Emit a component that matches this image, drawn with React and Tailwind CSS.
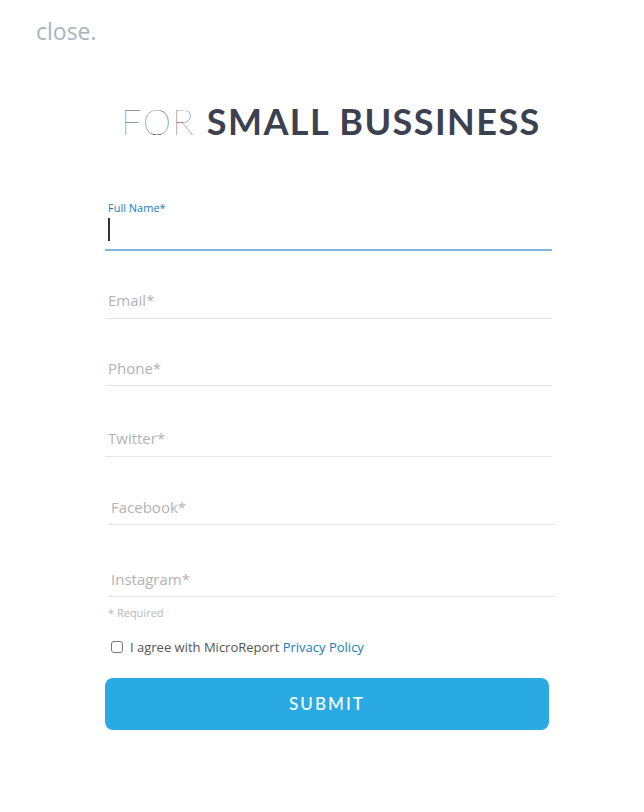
export default function App() {
  const fieldText = "text-[15px] leading-[20px] text-[#b3b3b3]";
  const font = { fontFamily: '"Open Sans", "Liberation Sans", sans-serif' };
  return (
    <div className="w-[644px] h-[812px] bg-white relative" style={font}>
      <div className="pt-[16px] pl-[36px] text-[23px] leading-[30px] text-[#a7b4c0]">close.</div>
      <h1
        className="mt-[55px] pl-[18px] text-center text-[36px] leading-[40px] tracking-[0.04em] text-[#3b4150]"
        style={{ fontFamily: 'Lato, "Open Sans", sans-serif' }}
      >
        <span className="font-thin text-[#3b4150]">FOR </span>
        <span className="font-bold">SMALL BUSSINESS</span>
      </h1>
      <div className="ml-[105px] w-[447px] mt-[59px]">
        <div className="border-b-2 border-[#7fb4de] pb-[7px]">
          <div className="pl-[3px] text-[11px] leading-[16px] text-[#1b7bc2]">Full Name*</div>
          <div className="pl-[3px] mt-[2px] h-[24px] flex items-start">
            <div className="w-[1.5px] h-[23px] bg-[#333]" />
          </div>
        </div>
        <div className={`mt-[39px] pl-[3px] pb-[8px] border-b border-[#e5e5e5] ${fieldText}`}>Email*</div>
        <div className={`mt-[39px] pl-[3px] pb-[7px] border-b border-[#e5e5e5] ${fieldText}`}>Phone*</div>
        <div className={`mt-[42px] pl-[3px] pb-[8px] border-b border-[#e5e5e5] ${fieldText}`}>Twitter*</div>
        <div className={`ml-[3px] -mr-[3px] mt-[40px] pl-[3px] pb-[7px] border-b border-[#e5e5e5] ${fieldText}`}>Facebook*</div>
        <div className={`ml-[3px] -mr-[3px] mt-[44px] pl-[3px] pb-[7px] border-b border-[#e5e5e5] ${fieldText}`}>Instagram*</div>
        <div className="mt-[9px] pl-[3px] text-[11px] leading-[14px] text-[#b8b8b8]">* Required</div>
        <label className="mt-[18px] ml-[6px] flex items-center gap-[7px] text-[13px] leading-[18px] text-[#555]">
          <span className="w-[12px] h-[12px] border border-[#777] rounded-[3px] bg-white" />
          <span>
            I agree with MicroReport <span className="text-[#1b7bc2]">Privacy Policy</span>
          </span>
        </label>
        <button
          className="mt-[22px] w-[444px] h-[52px] rounded-[8px] bg-[#29aae2] text-white text-[17px] font-medium tracking-[0.12em]"
          style={{ fontFamily: 'Lato, "Open Sans", sans-serif' }}
        >
          SUBMIT
        </button>
      </div>
    </div>
  );
}
